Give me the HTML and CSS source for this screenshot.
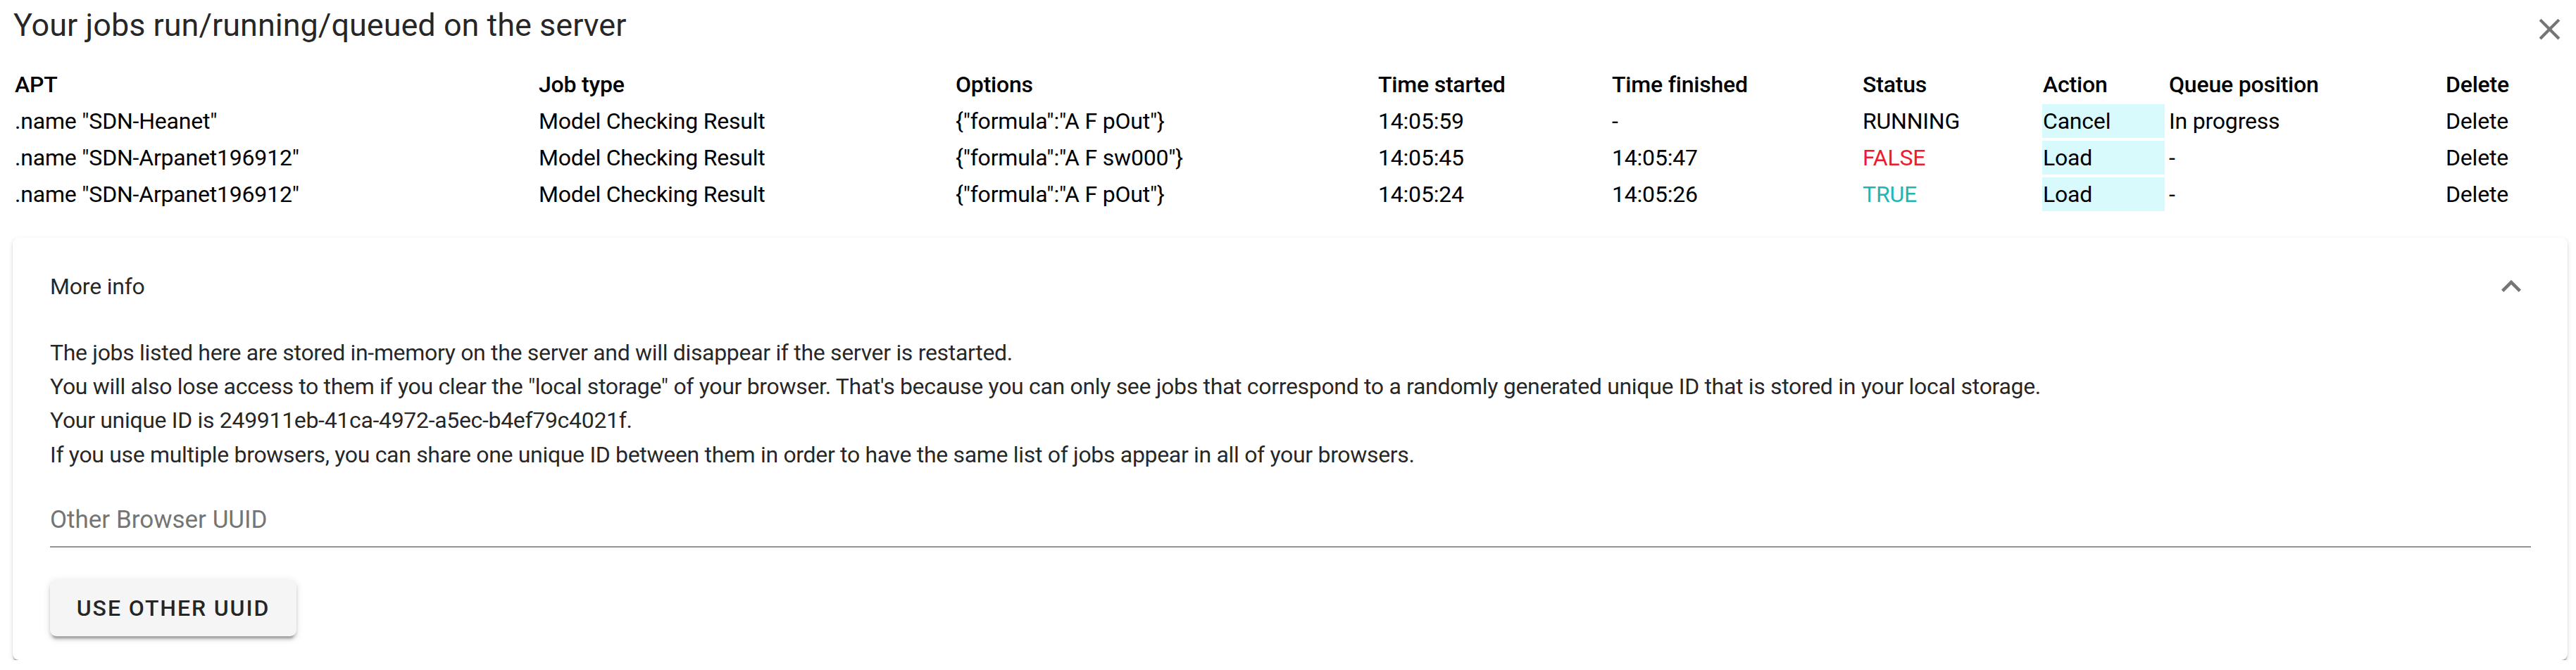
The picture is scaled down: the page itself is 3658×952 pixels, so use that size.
FILE: index.html
```html
<!DOCTYPE html>
<html lang="en">
<head>
<meta charset="utf-8">
<title>Your jobs</title>
<link rel="stylesheet" href="styles.css">
</head>
<body>
<div class="dialog">
  <header class="title-bar">
    <h2 class="title">Your jobs run/running/queued on the server</h2>
    <button class="close" aria-label="close">
      <svg viewBox="0 0 24 24" width="51" height="51"><path d="M19 6.41L17.59 5 12 10.59 6.41 5 5 6.41 10.59 12 5 17.59 6.41 19 12 13.41 17.59 19 19 17.59 13.41 12z"/></svg>
    </button>
  </header>
  <div class="content">
    <table class="jobs">
      <colgroup>
        <col class="c-apt"><col class="c-type"><col class="c-opt"><col class="c-ts"><col class="c-tf"><col class="c-status"><col class="c-action"><col class="c-queue"><col class="c-del">
      </colgroup>
      <thead>
        <tr><th>APT</th><th>Job type</th><th>Options</th><th>Time started</th><th>Time finished</th><th>Status</th><th>Action</th><th>Queue position</th><th>Delete</th></tr>
      </thead>
      <tbody>
        <tr><td>.name "SDN-Heanet"</td><td>Model Checking Result</td><td>{"formula":"A F pOut"}</td><td>14:05:59</td><td>-</td><td>RUNNING</td><td class="action">Cancel</td><td>In progress</td><td>Delete</td></tr>
        <tr><td>.name "SDN-Arpanet196912"</td><td>Model Checking Result</td><td>{"formula":"A F sw000"}</td><td>14:05:45</td><td>14:05:47</td><td class="false">FALSE</td><td class="action">Load</td><td>-</td><td>Delete</td></tr>
        <tr><td>.name "SDN-Arpanet196912"</td><td>Model Checking Result</td><td>{"formula":"A F pOut"}</td><td>14:05:24</td><td>14:05:26</td><td class="true">TRUE</td><td class="action">Load</td><td>-</td><td>Delete</td></tr>
      </tbody>
    </table>
    <section class="card">
      <div class="summary">
        <span class="summary-text">More info</span>
        <svg class="chevron" viewBox="0 0 24 24" width="56" height="56"><path d="M12 8l-6 6 1.41 1.41L12 10.83l4.59 4.58L18 14z"/></svg>
      </div>
      <div class="details">
        <p class="info">The jobs listed here are stored in-memory on the server and will disappear if the server is restarted.<br>You will also lose access to them if you clear the "local storage" of your browser. That's because you can only see jobs that correspond to a randomly generated unique ID that is stored in your local storage.<br>Your unique ID is 249911eb-41ca-4972-a5ec-b4ef79c4021f.<br>If you use multiple browsers, you can share one unique ID between them in order to have the same list of jobs appear in all of your browsers.</p>
        <div class="field"><label class="field-label">Other Browser UUID</label></div>
        <button class="btn">USE OTHER UUID</button>
      </div>
    </section>
  </div>
</div>
</body>
</html>
```
FILE: styles.css
```css
html, body {
  margin: 0;
  padding: 0;
  background: #ffffff;
}
body {
  font-family: Roboto, "Liberation Sans", Arial, sans-serif;
  color: #000;
}
.dialog {
  width: 3658px;
}
.title-bar {
  display: flex;
  justify-content: space-between;
  align-items: flex-start;
  height: 92px;
  box-sizing: border-box;
  padding: 6px 12px 0 19px;
}
.title {
  margin: 0;
  font-size: 45px;
  font-weight: 400;
  line-height: 60px;
  color: rgba(0, 0, 0, 0.87);
}
.close {
  border: 0;
  background: none;
  padding: 0;
  margin-top: 10px;
  width: 51px;
  height: 51px;
  fill: #757575;
}
.close svg { display: block; }
.content {
  padding: 0 9px 0 15px;
}
.jobs {
  border-collapse: separate;
  border-spacing: 5px 4px;
  table-layout: fixed;
  font-size: 32px;
  letter-spacing: -0.2px;
}
.c-apt { width: 739px; }
.c-type { width: 587px; }
.c-opt { width: 595px; }
.c-ts { width: 327px; }
.c-tf { width: 351px; }
.c-status { width: 251px; }
.c-action { width: 174px; }
.c-queue { width: 388px; }
.c-del { width: 92px; }
.jobs th, .jobs td {
  padding: 0 1px;
  height: 48px;
  line-height: 48px;
  text-align: left;
  white-space: nowrap;
  vertical-align: middle;
}
.jobs th { font-weight: 500; }
.jobs td { font-weight: 400; }
.jobs td.action { background: #d8fafd; }
.jobs td.false { color: #ee1b2d; }
.jobs td.true { color: #1fb6b8; }
.card {
  margin: 34px 3px 0;
  background: #fff;
  border-radius: 9px;
  box-shadow: 0 4.7px 2.3px -2.3px rgba(0,0,0,0.2), 0 2.3px 2.3px 0 rgba(0,0,0,0.14), 0 2.3px 7px 0 rgba(0,0,0,0.12);
}
.summary {
  display: flex;
  justify-content: space-between;
  align-items: center;
  padding: 41px 52px 0 53px;
}
.summary-text {
  font-size: 32px;
  letter-spacing: -0.2px;
  line-height: 48px;
  color: rgba(0, 0, 0, 0.87);
}
.chevron {
  display: block;
  fill: #757575;
}
.details {
  padding: 42px 52px 34px 53px;
  color: rgba(0, 0, 0, 0.87);
}
.info {
  margin: 0;
  font-size: 32px;
  letter-spacing: -0.32px;
  line-height: 48.2px;
}
.field {
  margin-top: 47px;
  padding-bottom: 15px;
  border-bottom: 2px solid #949494;
}
.field-label {
  display: block;
  font-size: 35px;
  line-height: 44px;
  color: #757575;
}
.btn {
  display: block;
  margin-top: 46px;
  width: 350px;
  height: 80px;
  padding: 0;
  border: 0;
  border-radius: 9px;
  background: #f5f5f5;
  font-family: Roboto, "Liberation Sans", Arial, sans-serif;
  font-size: 32px;
  font-weight: 500;
  letter-spacing: 1.9px;
  color: rgba(0, 0, 0, 0.87);
  box-shadow: 0 7px 2.3px -4.7px rgba(0,0,0,0.2), 0 4.7px 4.7px 0 rgba(0,0,0,0.14), 0 2.3px 11.7px 0 rgba(0,0,0,0.12);
}
```
